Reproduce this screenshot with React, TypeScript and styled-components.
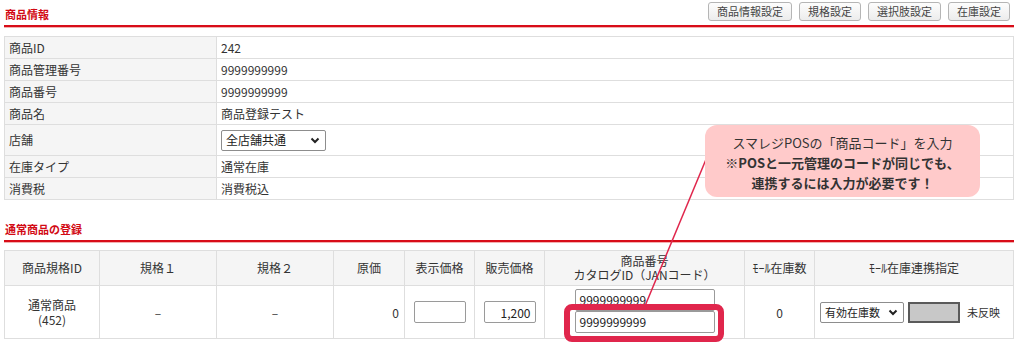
import styled, { createGlobalStyle } from "styled-components";

const GlobalStyle = createGlobalStyle`
  html, body { margin: 0; padding: 0; background: #fff; }
  body {
    font-family: "Noto Sans CJK JP", "Noto Sans", sans-serif;
    font-size: 12px;
    color: #333;
  }
`;

const Page = styled.div`
  position: relative;
  width: 1024px;
  height: 345px;
  padding: 0 10px 0 4px;
  box-sizing: border-box;
  overflow: hidden;
`;

const SectionHead = styled.div<{ $top?: number }>`
  display: flex;
  align-items: center;
  justify-content: space-between;
  height: 25px;
  margin-top: ${(p) => p.$top ?? 0}px;
  padding-left: 1px;
  border-bottom: 2px solid #d80c18;
  box-shadow: 0 1px 0 #f3b0b0;
`;

const Title = styled.h2`
  margin: 0;
  font-size: 11px;
  font-weight: bold;
  color: #d20a14;
  line-height: 1;
  padding-top: 3px;
`;

const ButtonRow = styled.div`
  display: flex;
  gap: 7px;
  padding-right: 4px;
  margin-top: -3px;
`;

const ToolButton = styled.button`
  height: 19px;
  padding: 0 8px;
  font-family: inherit;
  font-size: 11px;
  line-height: 1;
  color: #444;
  background: linear-gradient(#fdfdfd, #ececec);
  border: 1px solid #b5b5b5;
  border-radius: 3px;
`;

const Table = styled.table<{ $top: number }>`
  width: 100%;
  margin-top: ${(p) => p.$top}px;
  border-collapse: collapse;
  table-layout: fixed;
  border: 1px solid #dedede;
`;

const Col = styled.col<{ $w?: number }>`
  width: ${(p) => (p.$w ? `${p.$w}px` : "auto")};
`;

const Label = styled.th`
  height: 21px;
  padding: 0 4px;
  text-align: left;
  font-weight: normal;
  background: #f5f5f5;
  border: 1px solid #dedede;
  line-height: 1;
`;

const Value = styled.td<{ $tall?: boolean }>`
  height: ${(p) => (p.$tall ? 30 : 21)}px;
  padding: 0 4px;
  border: 1px solid #dedede;
  line-height: 1;
`;

const Select = styled.div<{ $w: number; $small?: boolean }>`
  display: inline-flex;
  align-items: center;
  justify-content: space-between;
  box-sizing: border-box;
  width: ${(p) => p.$w}px;
  height: 21px;
  padding: 0 5px 0 4px;
  border: 1px solid #8d8d8d;
  border-radius: 2px;
  background: #fff;
  font-size: ${(p) => (p.$small ? 11 : 12)}px;
  color: #222;
  vertical-align: middle;
`;

const Head = styled.th`
  height: 34px;
  padding: 0;
  font-weight: normal;
  background: #f5f5f5;
  border: 1px solid #dedede;
  line-height: 14px;
`;

const Cell = styled.td<{ $align?: string }>`
  height: 52px;
  padding: 0 5px;
  text-align: ${(p) => p.$align ?? "center"};
  border: 1px solid #dedede;
  line-height: 15px;
`;

const Input = styled.div<{ $w: number; $right?: boolean }>`
  display: flex;
  align-items: center;
  justify-content: ${(p) => (p.$right ? "flex-end" : "flex-start")};
  box-sizing: border-box;
  width: ${(p) => p.$w}px;
  height: 22px;
  margin: 0 auto;
  padding: 0 4px;
  border: 1px solid #9a9a9a;
  border-radius: 2px;
  background: #fff;
  font-size: 12px;
  color: #222;
`;

const InputStack = styled.div`
  display: flex;
  flex-direction: column;
  margin-top: -3px;
`;

const SyncCell = styled.div`
  display: flex;
  align-items: center;
  gap: 4px;
`;

const Swatch = styled.div`
  width: 52px;
  height: 21px;
  box-sizing: border-box;
  background: #c8c8c8;
  border: 2px solid #5a5a5a;
  margin-right: 3px;
`;

const Note = styled.span`
  font-size: 11px;
`;

const Balloon = styled.div`
  position: absolute;
  left: 705px;
  top: 125px;
  width: 275px;
  height: 72px;
  box-sizing: border-box;
  padding-top: 8px;
  border-radius: 12px;
  background: #ffcaca;
  text-align: center;
  font-size: 13px;
  line-height: 20px;
  color: #333;
`;

const Strong = styled.div`
  font-weight: bold;
`;

const Highlight = styled.div`
  position: absolute;
  left: 564px;
  top: 304px;
  width: 160px;
  height: 38px;
  box-sizing: border-box;
  border: 6px solid #e0264c;
  border-radius: 8px;
`;

const Pointer = styled.svg`
  position: absolute;
  left: 0;
  top: 0;
  pointer-events: none;
`;

function Chevron() {
  return (
    <svg width="10" height="7" viewBox="0 0 10 7">
      <path d="M1.5 1.5 L5 5 L8.5 1.5" fill="none" stroke="#222" strokeWidth="2" />
    </svg>
  );
}

const info: [string, string][] = [
  ["商品ID", "242"],
  ["商品管理番号", "9999999999"],
  ["商品番号", "9999999999"],
  ["商品名", "商品登録テスト"],
];

const colWidths = [95, 117, 117, 71, 70, 70, 200, 70];

export default function App() {
  return (
    <Page>
      <GlobalStyle />
      <SectionHead>
        <Title>商品情報</Title>
        <ButtonRow>
          <ToolButton>商品情報設定</ToolButton>
          <ToolButton>規格設定</ToolButton>
          <ToolButton>選択肢設定</ToolButton>
          <ToolButton>在庫設定</ToolButton>
        </ButtonRow>
      </SectionHead>

      <Table $top={9}>
        <colgroup>
          <Col $w={212} />
          <Col />
        </colgroup>
        <tbody>
          {info.map(([k, v]) => (
            <tr key={k}>
              <Label>{k}</Label>
              <Value>{v}</Value>
            </tr>
          ))}
          <tr>
            <Label>店舗</Label>
            <Value $tall>
              <Select $w={105}>
                全店舗共通
                <Chevron />
              </Select>
            </Value>
          </tr>
          <tr>
            <Label>在庫タイプ</Label>
            <Value>通常在庫</Value>
          </tr>
          <tr>
            <Label>消費税</Label>
            <Value>消費税込</Value>
          </tr>
        </tbody>
      </Table>

      <SectionHead $top={15}>
        <Title>通常商品の登録</Title>
      </SectionHead>

      <Table $top={8}>
        <colgroup>
          {colWidths.map((w, i) => (
            <Col key={i} $w={w} />
          ))}
          <Col />
        </colgroup>
        <thead>
          <tr>
            <Head>商品規格ID</Head>
            <Head>規格１</Head>
            <Head>規格２</Head>
            <Head>原価</Head>
            <Head>表示価格</Head>
            <Head>販売価格</Head>
            <Head>
              商品番号
              <br />
              カタログID（JANコード）
            </Head>
            <Head>ﾓｰﾙ在庫数</Head>
            <Head>ﾓｰﾙ在庫連携指定</Head>
          </tr>
        </thead>
        <tbody>
          <tr>
            <Cell>
              通常商品
              <br />
              (452)
            </Cell>
            <Cell>–</Cell>
            <Cell>–</Cell>
            <Cell $align="right">0</Cell>
            <Cell>
              <Input $w={52} />
            </Cell>
            <Cell>
              <Input $w={52} $right>
                1,200
              </Input>
            </Cell>
            <Cell>
              <InputStack>
                <Input $w={140}>9999999999</Input>
                <Input $w={140}>9999999999</Input>
              </InputStack>
            </Cell>
            <Cell>0</Cell>
            <Cell $align="left">
              <SyncCell>
                <Select $w={84} $small>
                  有効在庫数
                  <Chevron />
                </Select>
                <Swatch />
                <Note>未反映</Note>
              </SyncCell>
            </Cell>
          </tr>
        </tbody>
      </Table>

      <Pointer width="1024" height="345">
        <line x1="707" y1="157" x2="645" y2="306" stroke="#e0264c" strokeWidth="1.5" />
      </Pointer>
      <Balloon>
        スマレジPOSの「商品コード」を入力
        <Strong>※POSと一元管理のコードが同じでも、</Strong>
        <Strong>連携するには入力が必要です！</Strong>
      </Balloon>
      <Highlight />
    </Page>
  );
}
